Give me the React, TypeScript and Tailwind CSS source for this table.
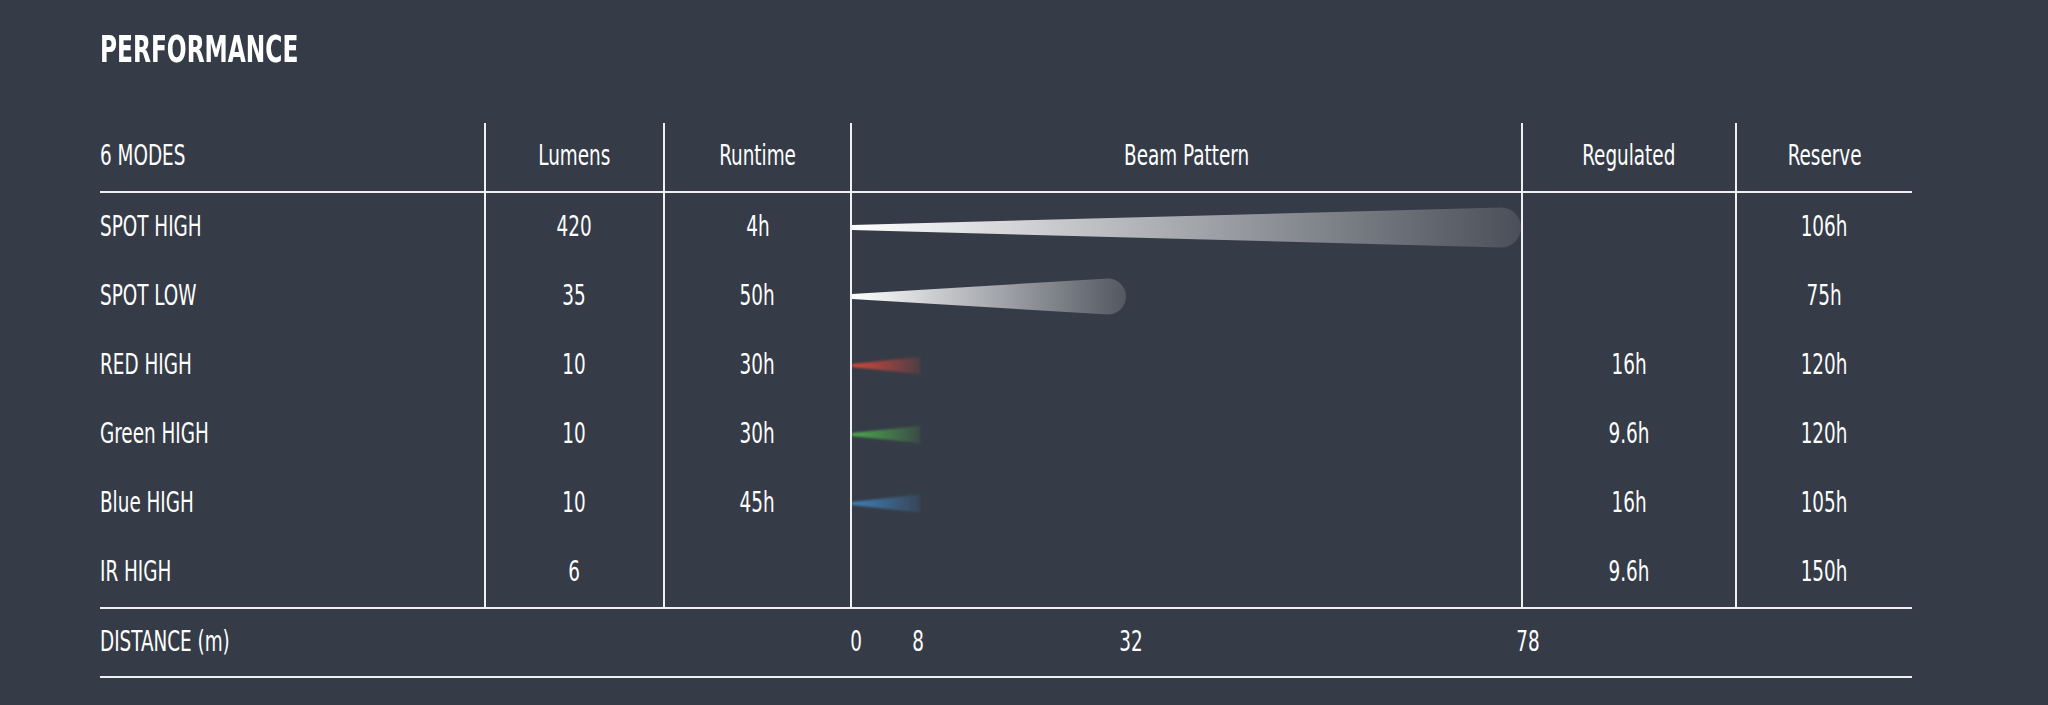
import React from "react";

interface Mode {
  name: string;
  lumens: string;
  runtime: string;
  regulated: string;
  reserve: string;
  beam?: { len: number; h: number; tip: number; color: string; end: number; round: boolean };
}

const modes: Mode[] = [
  { name: "SPOT HIGH", lumens: "420", runtime: "4h", regulated: "", reserve: "106h", beam: { len: 669, h: 40, tip: 5, color: "#ffffff", end: 0.1, round: true } },
  { name: "SPOT LOW", lumens: "35", runtime: "50h", regulated: "", reserve: "75h", beam: { len: 274, h: 36, tip: 5, color: "#ffffff", end: 0.14, round: true } },
  { name: "RED HIGH", lumens: "10", runtime: "30h", regulated: "16h", reserve: "120h", beam: { len: 68, h: 17, tip: 3, color: "#d4483c", end: 0.15, round: false } },
  { name: "Green HIGH", lumens: "10", runtime: "30h", regulated: "9.6h", reserve: "120h", beam: { len: 68, h: 17, tip: 3, color: "#4fa94b", end: 0.15, round: false } },
  { name: "Blue HIGH", lumens: "10", runtime: "45h", regulated: "16h", reserve: "105h", beam: { len: 68, h: 18, tip: 3, color: "#3f80b8", end: 0.15, round: false } },
  { name: "IR HIGH", lumens: "6", runtime: "", regulated: "9.6h", reserve: "150h" },
];

const cols = "grid grid-cols-[384px_179px_187px_671px_214px_177px]";
const cell = "flex items-center justify-center border-l-2 border-[#eef0f2]";

// distance ticks, x relative to start of the beam column
const ticks = [
  { label: "0", x: 6 },
  { label: "8", x: 68 },
  { label: "32", x: 281 },
  { label: "78", x: 678 },
];

// the original uses a very condensed face, so squeeze the narrowest one we have
function T({ children, left }: { children: React.ReactNode; left?: boolean }) {
  return (
    <span className={`inline-block whitespace-nowrap scale-x-[0.73] -translate-y-[1px] ${left ? "origin-left" : ""}`}>
      {children}
    </span>
  );
}

function Beam({ id, beam }: { id: string; beam: NonNullable<Mode["beam"]> }) {
  const c = 34.5;
  const r = beam.h / 2;
  const d = beam.round
    ? `M0 ${c - beam.tip / 2} L${beam.len - r} ${c - r} A${r} ${r} 0 0 1 ${beam.len - r} ${c + r} L0 ${c + beam.tip / 2} Z`
    : `M0 ${c - beam.tip / 2} L${beam.len} ${c - r} L${beam.len} ${c + r} L0 ${c + beam.tip / 2} Z`;
  return (
    <svg width="669" height="69" viewBox="0 0 669 69" className="block">
      <defs>
        <linearGradient id={id} x1="0" y1="0" x2="1" y2="0">
          <stop offset="0" stopColor={beam.color} stopOpacity="1" />
          <stop offset="1" stopColor={beam.color} stopOpacity={beam.end} />
        </linearGradient>
        <filter id={id + "-blur"} x="-10%" y="-50%" width="120%" height="200%">
          <feGaussianBlur stdDeviation="0.9" />
        </filter>
      </defs>
      <path d={d} fill={`url(#${id})`} filter={beam.round ? undefined : `url(#${id}-blur)`} />
    </svg>
  );
}

export default function App() {
  return (
    <div className="min-h-screen bg-[#363c47] px-[100px] pt-[31px] text-white font-['DejaVu_Sans_Condensed','Liberation_Sans_Narrow',sans-serif]">
      <h2 className="text-[37px] leading-none font-bold">
        <span className="inline-block scale-x-[0.7] origin-left">PERFORMANCE</span>
      </h2>

      <div className="mt-[55px] w-[1812px] text-[28px] leading-none">
        {/* header */}
        <div className={`${cols} h-[70px] border-b-2 border-[#eef0f2]`}>
          <div className="flex items-center"><T left>6 MODES</T></div>
          <div className={cell}><T>Lumens</T></div>
          <div className={cell}><T>Runtime</T></div>
          <div className={cell}><T>Beam Pattern</T></div>
          <div className={cell}><T>Regulated</T></div>
          <div className={cell}><T>Reserve</T></div>
        </div>

        {modes.map((m, i) => (
          <div key={m.name} className={`${cols} h-[69px]`}>
            <div className="flex items-center"><T left>{m.name}</T></div>
            <div className={cell}><T>{m.lumens}</T></div>
            <div className={cell}><T>{m.runtime}</T></div>
            <div className="border-l-2 border-[#eef0f2]">
              {m.beam && <Beam id={"beam" + i} beam={m.beam} />}
            </div>
            <div className={cell}><T>{m.regulated}</T></div>
            <div className={cell}><T>{m.reserve}</T></div>
          </div>
        ))}

        {/* distance scale */}
        <div className={`${cols} h-[71px] border-y-2 border-[#eef0f2]`}>
          <div className="col-span-3 flex items-center"><T left>DISTANCE (m)</T></div>
          <div className="relative">
            {ticks.map((t) => (
              <span
                key={t.label}
                className="absolute top-1/2 -translate-x-1/2 -translate-y-[55%] scale-x-[0.73] whitespace-nowrap"
                style={{ left: t.x }}
              >
                {t.label}
              </span>
            ))}
          </div>
        </div>
      </div>
    </div>
  );
}
